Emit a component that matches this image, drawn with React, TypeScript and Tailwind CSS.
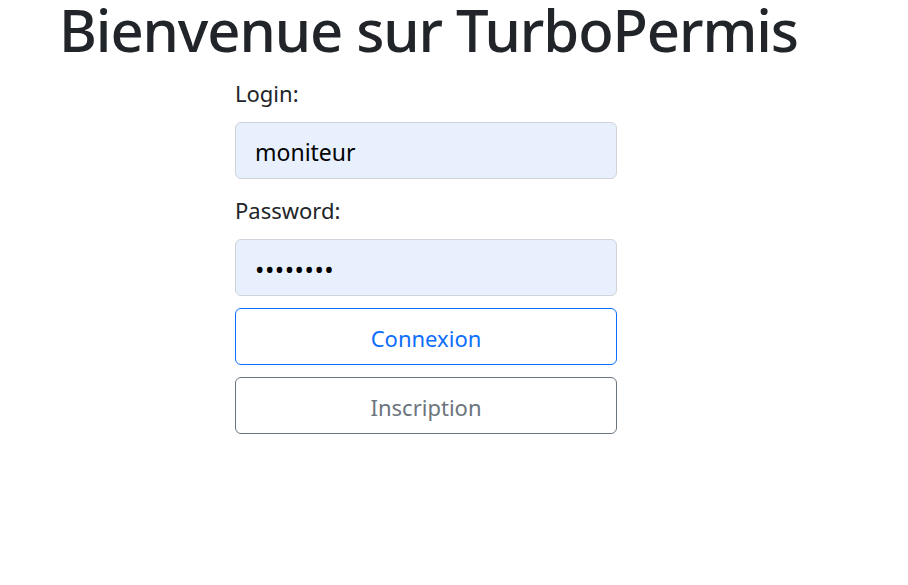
export default function App() {
  return (
    <div className="min-h-[585px] bg-white text-[#212529]" style={{ fontFamily: '"Noto Sans", "Open Sans", sans-serif' }}>
      <h1 className="pl-[59px] text-[58px] leading-[60px] font-medium tracking-[-1.1px]">Bienvenue sur TurboPermis</h1>
      <form className="ml-[235px] mt-[15px] flex w-[382px] flex-col" onSubmit={(e) => e.preventDefault()}>
        <label className="text-[22px] leading-[36px] mb-[11px]">Login:</label>
        <input
          type="text"
          defaultValue="moniteur"
          className="h-[57px] rounded-[6px] border border-[#ced4da] bg-[#e8f0fe] px-[19px] pt-[3px] text-[23px] text-black outline-none"
        />
        <label className="mt-[13px] mb-[11px] text-[22px] leading-[36px]">Password:</label>
        <input
          type="password"
          defaultValue="moniteur"
          className="h-[57px] rounded-[6px] border border-[#ced4da] bg-[#e8f0fe] px-[19px] pt-[3px] text-[25px] tracking-[0.5px] text-black outline-none"
        />
        <button type="submit" className="mt-[12px] h-[57px] rounded-[6px] border border-[#0d6efd] pt-[4px] text-[22px] text-[#0d6efd]">
          Connexion
        </button>
        <button type="button" className="mt-[12px] h-[57px] rounded-[6px] border border-[#6c757d] pt-[4px] text-[22px] text-[#6c757d]">
          Inscription
        </button>
      </form>
    </div>
  );
}
